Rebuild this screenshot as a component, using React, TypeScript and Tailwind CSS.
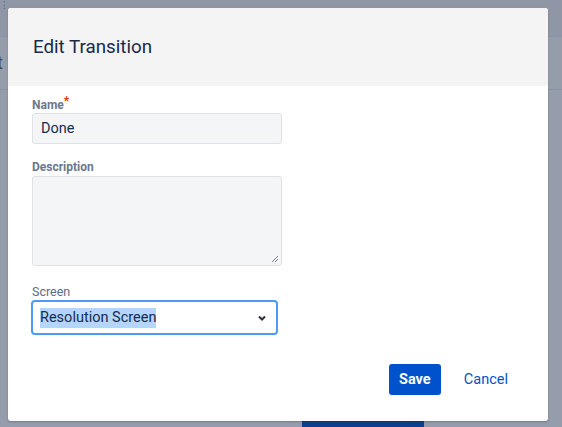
import React from "react";

export default function App() {
  return (
    <div
      className="relative w-[562px] h-[427px] overflow-hidden bg-[#959cab]"
      style={{ fontFamily: "Roboto, 'Noto Sans', Arial, sans-serif" }}
    >
      {/* background page (under overlay) */}
      <div className="flex flex-col">
        <div className="h-[37px] bg-[#8f97a6] border-b border-[#8a92a0] flex items-start pl-[3px]">
          <span className="text-[10px] leading-[12px] text-[#5b6478]">⁝</span>
        </div>
        <div className="h-[53px] bg-[#959dab] border-b border-[#8a92a0] flex items-center">
          <span className="text-[18px] leading-[20px] text-[#404a60] -ml-[3px]">t</span>
        </div>
      </div>
      <div className="absolute left-[302px] top-[421px] w-[122px] h-[8px] bg-[#0c3f8e]" />

      {/* modal */}
      <div className="absolute left-[8px] top-[8px] w-[540px] h-[413px] bg-white rounded-[3px] shadow-[0_1px_2px_rgba(9,30,66,0.25)] flex flex-col overflow-hidden">
        <div className="h-[78px] bg-[#f4f4f4] flex items-center pl-[25px] pt-[1px]">
          <h1 className="text-[18.75px] text-[#172b4d] font-normal">Edit Transition</h1>
        </div>
        <div className="flex flex-col pl-[24px] pt-[11px]">
          <label className="text-[12px] leading-[16px] font-bold text-[#6b778c]">
            Name<span className="text-[#de350b] relative -top-[4px]">*</span>
          </label>
          <div className="w-[250px] h-[31px] bg-[#f4f5f7] border border-[#dfe1e6] rounded-[3px] flex items-center px-[8px] text-[14.5px] text-[#172b4d]">
            Done
          </div>
          <label className="mt-[15px] text-[12px] leading-[16px] font-bold text-[#6b778c]">
            Description
          </label>
          <div className="relative w-[250px] h-[90px] mt-[1px] bg-[#f4f5f7] border border-[#dfe1e6] rounded-[3px]">
            <svg className="absolute right-[2px] bottom-[2px]" width="8" height="8" viewBox="0 0 8 8">
              <path d="M7 1L1 7M7 4L4 7" stroke="#7a7f88" strokeWidth="1" />
            </svg>
          </div>
          <label className="mt-[18px] text-[12.5px] leading-[16px] text-[#5e6c84]">Screen</label>
          <div className="-ml-[1px] w-[247px] h-[35px] border-2 border-[#4c9aff] rounded-[4px] flex items-center pl-[7px] pr-[9px] text-[14.5px] text-[#172b4d]">
            <span className="bg-[#b4d5fe] leading-[20px]">Resolution Screen</span>
            <svg className="ml-auto" width="10" height="8" viewBox="0 0 10 8">
              <path d="M2 2.5L5 5.5L8 2.5" stroke="#2a2f38" strokeWidth="2" fill="none" />
            </svg>
          </div>
        </div>
        <div className="mt-auto mb-[26px] flex items-center justify-end pr-[40px]">
          <button className="w-[52px] h-[31px] bg-[#0052cc] rounded-[3px] text-white text-[14.5px] font-bold">
            Save
          </button>
          <button className="ml-[23px] text-[14.5px] text-[#0052cc]">Cancel</button>
        </div>
      </div>
    </div>
  );
}
